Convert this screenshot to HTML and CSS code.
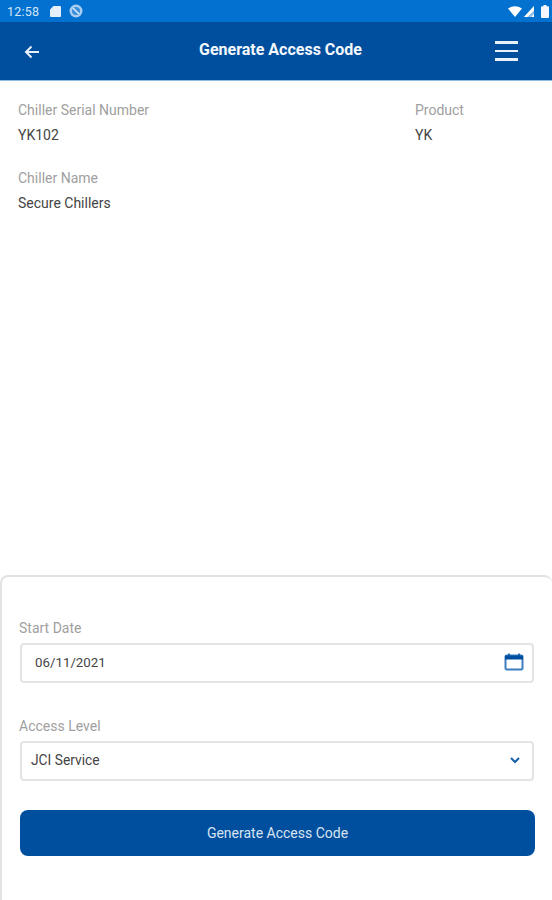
FILE: index.html

```html
<!DOCTYPE html>
<HTML>
   <HEAD>
      <TITLE>Generate Access Code</TITLE>
      <link rel="stylesheet" href="styles.css">
   </HEAD>
   <BODY>
      <DIV class="StatusBar">
         <SPAN class="Clock">12:58</SPAN>
         <svg class="SdIcon" width="11" height="11" viewBox="0 0 11 11"><path d="M3.500 0H10a1 1 0 0 1 1 1v9a1 1 0 0 1-1 1H1a1 1 0 0 1-1-1V3.500z" fill="#e6f0fa"/></svg>
         <svg class="SyncIcon" width="14" height="14" viewBox="0 0 14 14"><circle cx="7" cy="7" r="6.500" fill="#a9cdf0"/><circle cx="7" cy="7" r="4" fill="#3c8fd9"/><path d="M4 4l6 6" stroke="#dcebfa" stroke-width="1.500"/></svg>
         <DIV class="StatusRight">
            <svg class="WifiIcon" width="14" height="11" viewBox="0 0 14 11"><path d="M0 2.500Q7-2 14 2.500L7 11z" fill="#fff"/></svg>
            <svg class="SignalIcon" width="10" height="11" viewBox="0 0 10 11"><path d="M10 0v11H0z" fill="#8fbdea"/><path d="M10 0v4.500L3.500 11H0zM10 8v3H7z" fill="#fff"/></svg>
            <svg width="8" height="13" viewBox="0 0 8 13"><path d="M2.500 0h3v1.200H7a1 1 0 0 1 1 1V12a1 1 0 0 1-1 1H1a1 1 0 0 1-1-1V2.200a1 1 0 0 1 1-1h1.500z" fill="#f4f8fd"/></svg>
         </DIV>
      </DIV>
      <DIV class="TopBar">
         <svg class="BackIcon" width="16" height="14" viewBox="0 0 16 14"><path d="M15 7H2M7.500 1.500 2 7l5.500 5.500" fill="none" stroke="#e8f0fa" stroke-width="2"/></svg>
         <DIV class="TopTitle">Generate Access Code</DIV>
         <DIV class="MenuIcon"><SPAN></SPAN><SPAN></SPAN><SPAN></SPAN></DIV>
      </DIV>
      <DIV class="Details">
         <DIV class="DetailRow">
            <DIV class="DetailMain">
               <DIV class="Label">Chiller Serial Number</DIV>
               <DIV class="Value">YK102</DIV>
            </DIV>
            <DIV>
               <DIV class="Label">Product</DIV>
               <DIV class="Value">YK</DIV>
            </DIV>
         </DIV>
         <DIV class="Label">Chiller Name</DIV>
         <DIV class="Value">Secure Chillers</DIV>
      </DIV>
      <DIV class="Sheet">
         <DIV class="FieldLabel">Start Date</DIV>
         <DIV class="Field DateField">
            <SPAN>06/11/2021</SPAN>
            <svg class="CalIcon" width="20" height="18" viewBox="0 0 20 18"><rect x="1.500" y="2.500" width="17" height="14" rx="1.500" fill="#fff" stroke="#3d7fbf" stroke-width="2"/><path d="M1 2.500h18v4H1z" fill="#004f9f"/><path d="M5 0.500v3M15 0.500v3" stroke="#004f9f" stroke-width="1.500"/></svg>
         </DIV>
         <DIV class="FieldLabel SecondLabel">Access Level</DIV>
         <DIV class="Field LevelField">
            <SPAN>JCI Service</SPAN>
            <svg class="ChevIcon" width="10" height="7" viewBox="0 0 10 7"><path d="M1 1l4 4 4-4" fill="none" stroke="#1660a8" stroke-width="2"/></svg>
         </DIV>
         <DIV class="MainButton">Generate Access Code</DIV>
      </DIV>
   </BODY>
</HTML>
```

FILE: styles.css

```css
html, body
{
   margin: 0;
   height: 900px;
   overflow: hidden;
}
body
{
   display: flex;
   flex-direction: column;
   background: #fff;
   font-family: Roboto, "Liberation Sans", sans-serif;
   font-size: 14px;
   color: #444;
}
.StatusBar
{
   display: flex;
   align-items: center;
   height: 22px;
   padding: 0 3px 0 7px;
   background: #0271d0;
   color: #d5e6f7;
   font-size: 12.500px;
}
.Clock
{
   letter-spacing: 0.2px;
}
.SdIcon
{
   margin-left: 11px;
}
.SyncIcon
{
   margin-left: 8px;
}
.StatusRight
{
   display: flex;
   align-items: center;
   margin-left: auto;
}
.SignalIcon
{
   margin: 0 7px 0 2px;
}
.TopBar
{
   display: flex;
   align-items: center;
   height: 59px;
   padding: 0 34px 0 24px;
   background: #004f9f;
   border-bottom: 1px solid #8fbbe4;
   box-sizing: border-box;
}
.BackIcon
{
   flex: none;
   margin-top: 1px;
}
.TopTitle
{
   flex: 1;
   margin: -3px 0 0 26px;
   color: #f4f8fc;
   font-size: 16px;
   font-weight: 700;
   text-align: center;
}
.MenuIcon
{
   display: flex;
   flex-direction: column;
   gap: 6px;
   width: 23px;
}
.MenuIcon SPAN
{
   height: 2.500px;
   background: #e8f0fa;
}
.Details
{
   flex: 1;
   padding: 21px 18px 0;
}
.DetailRow
{
   display: flex;
}
.DetailMain
{
   width: 397px;
}
.Label
{
   color: #a0a0a0;
   line-height: 17px;
}
.Value
{
   margin: 8px 0 26px;
   line-height: 17px;
}
.Sheet
{
   height: 325px;
   padding: 43px 18px 0 18px;
   border: 2px solid #e0e2e3;
   border-right: 0;
   border-bottom: 0;
   border-radius: 8px 8px 0 0;
   box-sizing: border-box;
}
.FieldLabel
{
   margin: 0 0 6px -1px;
   color: #a0a0a0;
   line-height: 17px;
}
.SecondLabel
{
   margin-top: 35px;
}
.Field
{
   display: flex;
   align-items: center;
   justify-content: space-between;
   height: 40px;
   padding-bottom: 2px;
   border: 2px solid #e2e4e5;
   border-radius: 4px;
   box-sizing: border-box;
}
.DateField
{
   padding-left: 13px;
   padding-right: 8px;
   font-size: 13.300px;
}
.LevelField
{
   padding-left: 9px;
   padding-right: 12px;
   font-size: 13.800px;
}
.MainButton
{
   display: flex;
   align-items: center;
   justify-content: center;
   height: 46px;
   margin: 29px -1px 0 0;
   border-radius: 8px;
   background: #004f9f;
   color: #d8e4f1;
}
```
